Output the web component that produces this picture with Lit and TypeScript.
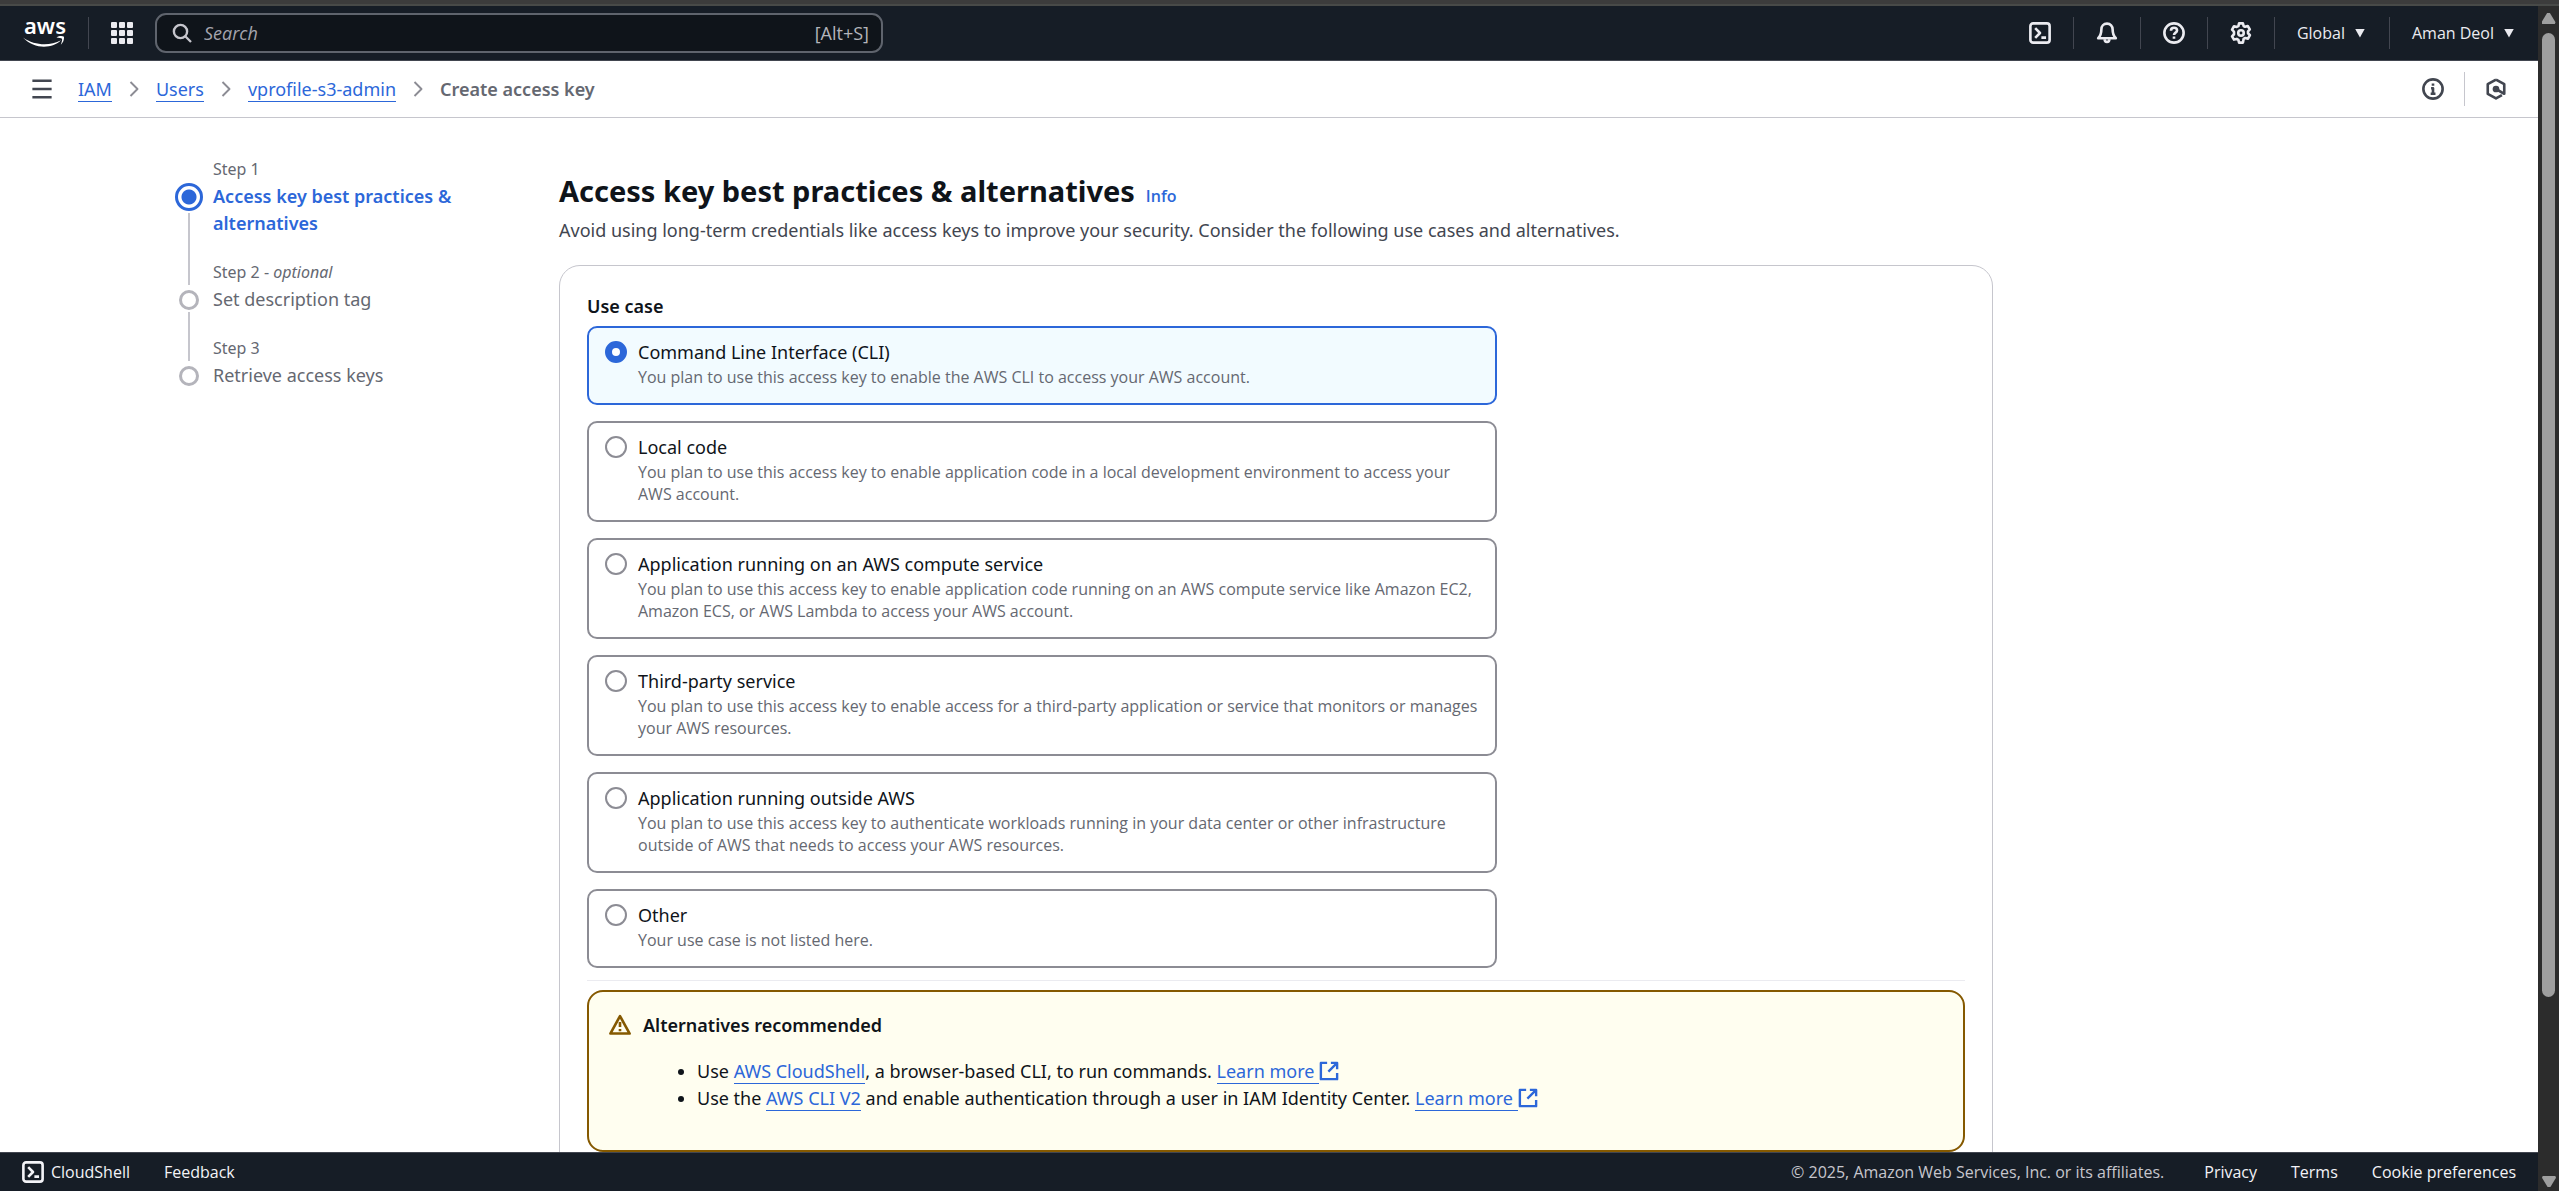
import { LitElement, html, css, svg, nothing, TemplateResult } from "lit";
import { customElement, property, state } from "lit/decorators.js";
import { classMap } from "lit/directives/class-map.js";

const ICONS: Record<string, TemplateResult> = {
  cloudshell: svg`<rect x="1" y="1" width="14" height="14" rx="2"/><path d="M4.500 4.500 8 8l-3.500 3.500M9 11.400h3.400"/>`,
  bell: svg`<path d="M8 1.200c-2.500 0-4.100 1.900-4.100 4.200 0 3.300-.8 4.800-2.300 6.400h12.800c-1.500-1.600-2.300-3.100-2.300-6.400 0-2.300-1.600-4.200-4.100-4.200Z"/><path d="M6.300 12.500a1.700 2 0 0 0 3.400 0"/>`,
  help: svg`<circle cx="8" cy="8" r="7"/><path d="M5.800 6.300c0-1.300 1-2.100 2.200-2.100s2.200.8 2.200 2c0 1.600-2.200 1.500-2.200 3.300M8 10.600v1.600"/>`,
  gear: svg`<path d="M6.600 1h2.800l.5 1.900 1.100.6 1.900-.6 1.500 2.500-1.300 1.400v1.400l1.400 1.400-1.400 2.500-2-.5-1.200.7L9.400 15H6.600l-.5-2-1.200-.7-2 .5-1.400-2.400 1.400-1.500V7.100L1.500 5.500l1.400-2.400 2 .5L6.100 3Z"/><circle cx="8" cy="8" r="2"/>`,
  menu: svg`<path d="M1 2h14M1 8h14M1 14h14"/>`,
  info: svg`<circle cx="8" cy="8" r="7"/><path d="M8 4v1.700M6.600 7.500H8v4M6.300 11.500h3.500"/>`,
  hexagon: svg`<path d="M8 1.100 14 4.500v7l-6-3.500M8 1.100 2 4.500v7L8 14.900l4.300-2.500"/><circle cx="8" cy="8" r="1.500" fill="currentColor"/>`,
  chevron: svg`<path d="m4.500 1 7 7-7 7"/>`,
  search: svg`<circle cx="6.800" cy="6.800" r="5.300"/><path d="m10.600 10.600 4.600 4.600"/>`,
  warning: svg`<path d="M8 1.500 15 14.200H1Z"/><path d="M8 5.800v3.700M8 10.900v1.600"/>`,
  external: svg`<path d="M6.500 1.500H1.500v13h13V9.500M9.500 1.500h5V6.500M14.500 1.500 7.500 8.500"/>`,
};

@customElement("ui-icon")
export class UiIcon extends LitElement {
  @property() name = "";
  static styles = css`
    :host { display: inline-flex; width: 22px; height: 22px; flex: none; }
    svg { width: 100%; height: 100%; fill: none; stroke: currentColor; stroke-width: 1.9; stroke-linejoin: round; }
  `;
  render() {
    return html`<svg viewBox="0 0 16 16" aria-hidden="true">${ICONS[this.name]}</svg>`;
  }
}

const USE_CASES = [
  ["cli", "Command Line Interface (CLI)", "You plan to use this access key to enable the AWS CLI to access your AWS account."],
  ["local", "Local code", "You plan to use this access key to enable application code in a local development environment to access your AWS account."],
  ["compute", "Application running on an AWS compute service", "You plan to use this access key to enable application code running on an AWS compute service like Amazon EC2, Amazon ECS, or AWS Lambda to access your AWS account."],
  ["third", "Third-party service", "You plan to use this access key to enable access for a third-party application or service that monitors or manages your AWS resources."],
  ["outside", "Application running outside AWS", "You plan to use this access key to authenticate workloads running in your data center or other infrastructure outside of AWS that needs to access your AWS resources."],
  ["other", "Other", "Your use case is not listed here."],
];

const STEPS = [
  { label: "Step 1", optional: false, title: "Access key best practices & alternatives" },
  { label: "Step 2", optional: true, title: "Set description tag" },
  { label: "Step 3", optional: false, title: "Retrieve access keys" },
];

@customElement("app-root")
export class AppRoot extends LitElement {
  @state() private selected = "cli";

  static styles = css`
    :host {
      --link: #2c67d9;
      --ink: #0f141a;
      --muted: #656871;
      --dark: #161d26;
      --small: 400 16px/22px "Open Sans", "Noto Sans", sans-serif;
      display: flex;
      flex-direction: column;
      height: 100vh;
      background: #fff;
      color: var(--ink);
      font: 400 18px/27px "Noto Sans", "Open Sans", sans-serif;
    }
    * { box-sizing: border-box; }
    a { color: var(--link); text-decoration: none; }
    button { border: 0; background: none; padding: 0; color: inherit; font: inherit; display: flex; align-items: center; justify-content: center; cursor: pointer; }
    h1, h2, p, ul, ol { margin: 0; padding: 0; }

    .strip { flex: none; height: 6px; background: #3c3c3c; border-bottom: 2px solid #484a48; }
    .window { flex: 1; min-height: 0; display: flex; }
    .page { flex: 1; min-width: 0; display: flex; flex-direction: column; }

    .topbar { flex: none; height: 55px; display: flex; align-items: center; background: var(--dark); border-bottom: 1px solid #424650; color: #ebebf0; font: var(--small); }
    .logo { width: 88px; padding-left: 22px; display: flex; }
    .logo svg { width: 44px; height: 46px; }
    .logo text { font: 600 22px "Noto Sans", sans-serif; fill: #fff; }
    .rule { width: 1px; height: 32px; background: #424650; flex: none; }
    .apps { width: 66px; height: 40px; }
    .apps svg { width: 22px; height: 22px; fill: #ebebf0; }
    .search { width: 728px; height: 40px; display: flex; align-items: center; gap: 12px; padding: 0 12px 0 15px; border: 2px solid #5f646d; border-radius: 11px; background: #0f141a; color: #b4b4bb; font: 400 18px/27px "Open Sans", sans-serif; }
    .search ui-icon { width: 20px; height: 20px; color: #c6c6cd; }
    .search input { flex: 1; min-width: 0; border: 0; padding: 0; background: none; outline: none; color: inherit; font: inherit; }
    .search input::placeholder { color: #a4a4ad; opacity: 1; font-style: italic; }
    .tools { margin-left: auto; display: flex; align-items: center; }
    .tool { width: 66px; height: 40px; }
    .menu { gap: 10px; padding: 0 24px 0 22px; font-weight: 500; }
    .caret { width: 10px; height: 9px; background: currentColor; clip-path: polygon(0 0, 100% 0, 50% 100%); }

    .crumbs { flex: none; height: 57px; display: flex; align-items: center; padding: 0 31px; border-bottom: 1px solid #c6c6cd; color: #424650; }
    .crumbs .burger { width: 21px; margin-right: 26px; }
    .trail { display: flex; align-items: center; list-style: none; }
    .trail li { display: flex; align-items: center; }
    .trail a { line-height: 24px; border-bottom: 1px solid var(--link); }
    .trail ui-icon { width: 16px; height: 18px; margin: 0 14px; color: #8c8c94; }
    .current { color: var(--muted); font-weight: 600; }
    .panels { margin-left: auto; display: flex; align-items: center; gap: 20px; }
    .panels .rule { height: 34px; background: #c6c6cd; }

    .content { flex: 1; min-height: 0; overflow: hidden; display: grid; grid-template-columns: 384px minmax(0, 1434px); align-items: start; padding: 40px 48px 0 175px; }

    .steps { list-style: none; }
    .step { display: grid; grid-template-columns: 28px 1fr; column-gap: 10px; padding-right: 64px; color: var(--muted); }
    .step-label { grid-column: 2; padding-bottom: 3px; font-size: 16px; line-height: 22px; }
    .rail { grid-column: 1; display: flex; flex-direction: column; align-items: center; gap: 2px; }
    .dot { width: 20px; height: 20px; margin-top: 4px; border: 3px solid #b4b4bb; border-radius: 50%; flex: none; }
    .line { width: 2px; flex: 1; margin-bottom: -24px; background: #c6c6cd; }
    .step-title { grid-column: 2; padding-bottom: 24px; }
    .active .dot { width: 28px; height: 28px; margin-top: 0; border-color: var(--link); background: radial-gradient(circle, var(--link) 7px, transparent 8px); }
    .active .step-title { color: var(--link); font-weight: 600; }

    .heading { display: flex; align-items: baseline; gap: 11px; padding: 11px 0 4px; }
    h1 { font-size: 29px; line-height: 44px; font-weight: 700; }
    .info { font: var(--small); font-weight: 600; }
    .lead { color: #424650; padding-bottom: 21px; }
    .card { border: 1px solid #c6c6cd; border-radius: 21px; padding: 27px; }
    fieldset { border: 0; margin: 0; padding: 0; max-width: 910px; display: flex; flex-direction: column; gap: 16px; }
    legend { padding: 0 0 6px; font-weight: 600; }
    .tile { display: grid; grid-template-columns: 22px 1fr; column-gap: 11px; padding: 11px 12px 15px 16px; border: 2px solid #8c8c94; border-radius: 10px; cursor: pointer; }
    .tile input { appearance: none; margin: 2px 0 0; width: 22px; height: 22px; border: 2px solid #8c8c94; border-radius: 50%; background: #fff; }
    .tile input:checked { border: 7px solid var(--link); }
    .chosen { border-color: var(--link); background: #f2fbff; }
    .desc { grid-column: 2; color: var(--muted); font: var(--small); }

    .divider { height: 1px; background: #ebebf0; margin: 12px 0 9px; }
    .alert { display: grid; grid-template-columns: 22px 1fr; column-gap: 12px; padding: 20px 20px 38px; border: 2px solid #855900; border-radius: 16px; background: #fffef0; }
    .alert ui-icon.warn { margin-top: 2px; color: #855900; }
    .alert h2 { font-size: 18px; line-height: 27px; font-weight: 600; }
    .alert ul { grid-column: 2; padding: 19px 0 0 54px; }
    .alert a { display: inline-block; line-height: 24px; border-bottom: 1px solid var(--link); }
    .ext { width: 20px; height: 20px; color: var(--link); vertical-align: -3px; }

    .footer { flex: none; height: 39px; display: flex; align-items: center; padding: 0 22px; background: var(--dark); border-top: 1px solid #424650; color: #f3f3f7; font: var(--small); font-weight: 500; }
    .footer a { color: inherit; }
    .footer button { gap: 7px; margin-right: 34px; }
    .legal { margin-left: auto; display: flex; gap: 34px; }
    .legal span { color: #c6c6cd; font-weight: 400; padding-right: 6px; }

    .scroll { flex: none; width: 21px; padding: 7px 4px 4px; display: flex; flex-direction: column; align-items: center; background: #2c2c2c; }
    .up, .down { width: 14px; height: 11px; background: #9f9f9f; clip-path: polygon(40% 0, 60% 0, 100% 85%, 95% 100%, 5% 100%, 0 85%); }
    .down { transform: rotate(180deg); }
    .track { flex: 1; width: 13px; padding: 9px 0; }
    .thumb { height: 85%; border-radius: 7px; background: #9f9f9f; }
  `;

  private learnMore() {
    return html`<a href="#">Learn more&nbsp;</a><ui-icon class="ext" name="external"></ui-icon>`;
  }

  render() {
    return html`
      <div class="strip"></div>
      <div class="window">
        <div class="page">
          <header class="topbar">
            <a class="logo" href="#" aria-label="AWS home">
              <svg viewBox="0 -7 44 46">
                <text x="2" y="17">aws</text>
                <path d="M1 20.500c12 8.500 27 8.500 38 2.800-8 8-26 10-38-2.800Z" fill="#fff"/>
                <path d="M34.500 20.500c3-2 6-1.500 7.500-.8.300 3-1 6-3.200 8 1-3 1.600-5 1.200-6-1-.8-3-.9-5.500-1.200Z" fill="#fff"/>
              </svg>
            </a>
            <span class="rule"></span>
            <button class="apps" aria-label="Services">
              <svg viewBox="0 0 22 22">
                ${[0, 8, 16].map((y) => [0, 8, 16].map((x) => svg`<rect x=${x} y=${y} width="6" height="6" rx="1"/>`))}
              </svg>
            </button>
            <label class="search">
              <ui-icon name="search"></ui-icon>
              <input type="text" placeholder="Search" aria-label="Search" />
              <span>[Alt+S]</span>
            </label>
            <div class="tools">
              <button class="tool" aria-label="CloudShell"><ui-icon name="cloudshell"></ui-icon></button>
              <span class="rule"></span>
              <button class="tool" aria-label="Notifications"><ui-icon name="bell"></ui-icon></button>
              <span class="rule"></span>
              <button class="tool" aria-label="Support"><ui-icon name="help"></ui-icon></button>
              <span class="rule"></span>
              <button class="tool" aria-label="Settings"><ui-icon name="gear"></ui-icon></button>
              <span class="rule"></span>
              <button class="menu">Global<span class="caret"></span></button>
              <span class="rule"></span>
              <button class="menu">Aman Deol<span class="caret"></span></button>
            </div>
          </header>

          <nav class="crumbs" aria-label="Breadcrumbs">
            <button class="burger" aria-label="Open navigation"><ui-icon name="menu"></ui-icon></button>
            <ol class="trail">
              ${["IAM", "Users", "vprofile-s3-admin"].map(
                (c) => html`<li><a href="#">${c}</a><ui-icon name="chevron"></ui-icon></li>`
              )}
              <li class="current">Create access key</li>
            </ol>
            <div class="panels">
              <button aria-label="Help panel"><ui-icon name="info"></ui-icon></button>
              <span class="rule"></span>
              <button aria-label="Amazon Q"><ui-icon name="hexagon"></ui-icon></button>
            </div>
          </nav>

          <main class="content">
            <ol class="steps">
              ${STEPS.map(
                (s, i) => html`
                  <li class=${classMap({ step: true, active: i === 0 })}>
                    <div class="step-label">${s.label}${s.optional ? html` - <i>optional</i>` : nothing}</div>
                    <div class="rail">
                      <span class="dot"></span>
                      ${i < STEPS.length - 1 ? html`<span class="line"></span>` : nothing}
                    </div>
                    <div class="step-title">${s.title}</div>
                  </li>`
              )}
            </ol>

            <section>
              <div class="heading">
                <h1>Access key best practices &amp; alternatives</h1>
                <a class="info" href="#">Info</a>
              </div>
              <p class="lead">Avoid using long-term credentials like access keys to improve your security. Consider the following use cases and alternatives.</p>
              <div class="card">
                <fieldset>
                  <legend>Use case</legend>
                  ${USE_CASES.map(
                    ([id, title, text]) => html`
                      <label class=${classMap({ tile: true, chosen: this.selected === id })}>
                        <input type="radio" name="use-case" .checked=${this.selected === id} @change=${() => (this.selected = id)} />
                        <span>${title}</span>
                        <span class="desc">${text}</span>
                      </label>`
                  )}
                </fieldset>
                <div class="divider"></div>
                <div class="alert">
                  <ui-icon class="warn" name="warning"></ui-icon>
                  <h2>Alternatives recommended</h2>
                  <ul>
                    <li>Use <a href="#">AWS CloudShell</a>, a browser-based CLI, to run commands. ${this.learnMore()}</li>
                    <li>Use the <a href="#">AWS CLI V2</a> and enable authentication through a user in IAM Identity Center. ${this.learnMore()}</li>
                  </ul>
                </div>
              </div>
            </section>
          </main>

          <footer class="footer">
            <button><ui-icon name="cloudshell"></ui-icon>CloudShell</button>
            <a href="#">Feedback</a>
            <div class="legal">
              <span>© 2025, Amazon Web Services, Inc. or its affiliates.</span>
              <a href="#">Privacy</a>
              <a href="#">Terms</a>
              <a href="#">Cookie preferences</a>
            </div>
          </footer>
        </div>
        <div class="scroll" aria-hidden="true">
          <span class="up"></span>
          <div class="track"><div class="thumb"></div></div>
          <span class="down"></span>
        </div>
      </div>
    `;
  }
}
